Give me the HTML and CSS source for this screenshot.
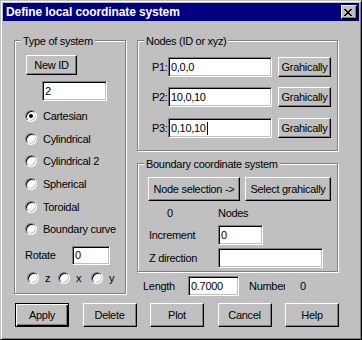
FILE: index.html
```html
<!DOCTYPE html>
<html lang="en">
<head>
  <meta charset="UTF-8">
  <title>Define local coordinate system</title>
  <link rel="stylesheet" href="styles.css">
</head>
<body>
  <div class="dialog">
    <div class="titlebar">
      <span class="title">Define local coordinate system</span>
      <span class="close-btn">
        <svg width="8" height="7" viewBox="0 0 8 7" shape-rendering="crispEdges">
          <path d="M0 0h2v1h-2zM6 0h2v1h-2zM1 1h2v1h-2zM5 1h2v1h-2zM2 2h4v1h-4zM3 3h2v1h-2zM2 4h4v1h-4zM1 5h2v1h-2zM5 5h2v1h-2zM0 6h2v1h-2zM6 6h2v1h-2z" fill="#000"/>
        </svg>
      </span>
    </div>
    <div class="content">
      <div class="main">
        <div class="group type-group">
          <span class="legend">Type of system</span>
          <button class="btn new-id">New ID</button>
          <div class="field id-field">2</div>
          <div class="radios">
            <div class="radio-row"><span class="radio checked"></span><span>Cartesian</span></div>
            <div class="radio-row"><span class="radio"></span><span>Cylindrical</span></div>
            <div class="radio-row"><span class="radio"></span><span>Cylindrical 2</span></div>
            <div class="radio-row"><span class="radio"></span><span>Spherical</span></div>
            <div class="radio-row"><span class="radio"></span><span>Toroidal</span></div>
            <div class="radio-row"><span class="radio"></span><span>Boundary curve</span></div>
          </div>
          <div class="rotate-row">
            <span class="rotate-label">Rotate</span>
            <div class="field rotate-field">0</div>
          </div>
          <div class="axis-row">
            <div class="axis axis-z"><span class="radio"></span><span>z</span></div>
            <div class="axis axis-x"><span class="radio"></span><span>x</span></div>
            <div class="axis"><span class="radio"></span><span>y</span></div>
          </div>
        </div>

        <div class="right-col">
          <div class="group nodes-group">
            <span class="legend">Nodes (ID or xyz)</span>
            <div class="node-row">
              <span class="node-label">P1:</span>
              <div class="field node-field">0,0,0</div>
              <button class="btn pick">Grahically</button>
            </div>
            <div class="node-row">
              <span class="node-label">P2:</span>
              <div class="field node-field">10,0,10</div>
              <button class="btn pick">Grahically</button>
            </div>
            <div class="node-row">
              <span class="node-label">P3:</span>
              <div class="field node-field">0,10,10<span class="caret"></span></div>
              <button class="btn pick">Grahically</button>
            </div>
          </div>

          <div class="group boundary-group">
            <span class="legend">Boundary coordinate system</span>
            <div class="sel-row">
              <button class="btn node-sel">Node selection -&gt;</button>
              <button class="btn sel-graph">Select grahically</button>
            </div>
            <div class="count-row">
              <span class="count">0</span>
              <span>Nodes</span>
            </div>
            <div class="form-row inc-row">
              <span class="form-label">Increment</span>
              <div class="field inc-field">0</div>
            </div>
            <div class="form-row zdir-row">
              <span class="form-label">Z direction</span>
              <div class="field zdir-field"></div>
            </div>
          </div>

          <div class="length-row">
            <span class="length-label">Length</span>
            <div class="field length-field">0.7000</div>
            <span class="number-label">Number</span>
            <span class="number-value">0</span>
          </div>
        </div>
      </div>

      <div class="actions">
        <button class="btn action default">Apply</button>
        <button class="btn action">Delete</button>
        <button class="btn action">Plot</button>
        <button class="btn action">Cancel</button>
        <button class="btn action">Help</button>
      </div>
    </div>
  </div>
</body>
</html>
```

FILE: styles.css
```css
* {
  box-sizing: border-box;
}
html, body {
  margin: 0;
}
body {
  background: #c0c0c0;
  font-family: "Liberation Sans", Arial, sans-serif;
  font-size: 11px;
  letter-spacing: -0.3px;
  color: #000;
}

/* window frame */
.dialog {
  width: 362px;
  height: 340px;
  padding: 2px;
  background: #c0c0c0;
  border: 1px solid;
  border-color: #c0c0c0 #000 #000 #c0c0c0;
  box-shadow: inset 1px 1px #fff, inset -1px -1px #808080;
}
.titlebar {
  height: 18px;
  display: flex;
  align-items: center;
  justify-content: space-between;
  padding: 0 2px 0 3px;
  background: #000080;
  color: #fff;
}
.title {
  font-weight: bold;
  font-size: 12px;
  letter-spacing: -0.1px;
}
.close-btn {
  width: 16px;
  height: 14px;
  padding: 3px 0 0 2px;
  background: #c0c0c0;
  border: 1px solid;
  border-color: #fff #000 #000 #fff;
  box-shadow: inset -1px -1px #808080;
}
.close-btn svg {
  display: block;
}

.content {
  padding: 19px 0 0 11px;
}
.main {
  display: grid;
  grid-template-columns: 112px 201px;
  column-gap: 11px;
  align-items: start;
}

/* controls */
.btn {
  padding: 0;
  font: inherit;
  letter-spacing: inherit;
  color: #000;
  background: #c0c0c0;
  border: 1px solid;
  border-color: #fff #000 #000 #fff;
  box-shadow: inset -1px -1px #808080;
  border-radius: 0;
}
.btn.default {
  border-color: #000;
  box-shadow: inset 1px 1px #fff, inset -1px -1px #000, inset -2px -2px #808080;
}
.field {
  display: flex;
  align-items: center;
  padding: 0 2px;
  background: #fff;
  border: 1px solid;
  border-color: #808080 #fff #fff #808080;
  box-shadow: inset 1px 1px #000, inset -1px -1px #c0c0c0;
  white-space: nowrap;
}
.caret {
  width: 1px;
  height: 13px;
  margin-left: 1px;
  background: #000;
}
.radio {
  position: relative;
  flex: none;
  width: 12px;
  height: 12px;
  border-radius: 50%;
  background: #fff;
  border: 1px solid;
  border-color: #808080 #fff #fff #808080;
  box-shadow: inset 1px 1px #000, inset -1px -1px #c0c0c0;
}
.radio.checked::after {
  content: "";
  position: absolute;
  left: 3px;
  top: 3px;
  width: 4px;
  height: 4px;
  border-radius: 50%;
  background: #000;
}

/* group boxes */
.group {
  position: relative;
  border: 1px solid #808080;
  box-shadow: inset 1px 1px #fff, 1px 1px #fff;
}
.legend {
  position: absolute;
  top: -6px;
  left: 6px;
  padding: 0 2px;
  line-height: 13px;
  background: #c0c0c0;
  white-space: nowrap;
}

/* type of system */
.type-group {
  height: 254px;
  display: flex;
  flex-direction: column;
  align-items: flex-start;
}
.new-id {
  margin: 14px 0 0 11px;
  width: 51px;
  height: 20px;
}
.id-field {
  margin: 6px 0 0 27px;
  width: 65px;
  height: 20px;
}
.radios {
  margin-top: 4px;
}
.radio-row {
  height: 22.6px;
  display: flex;
  align-items: center;
  gap: 6px;
  padding-left: 10px;
}
.rotate-row {
  display: flex;
  align-items: center;
  margin: 5px 0 0 10px;
}
.rotate-label {
  width: 47px;
}
.rotate-field {
  width: 38px;
  height: 19px;
}
.axis-row {
  display: flex;
  align-items: center;
  height: 14px;
  margin-top: 6px;
  padding-left: 12px;
}
.axis {
  display: flex;
  align-items: center;
  gap: 6px;
}
.axis-z {
  width: 31px;
}
.axis-x {
  width: 33px;
}

/* nodes */
.nodes-group {
  height: 111px;
  padding: 16px 0 0 14px;
}
.node-row {
  display: flex;
  align-items: center;
  height: 20px;
}
.node-row + .node-row {
  margin-top: 10px;
}
.node-row:last-child {
  margin-top: 11px;
}
.node-label {
  width: 16px;
}
.node-field {
  width: 104px;
  height: 20px;
}
.pick {
  margin-left: 6px;
  width: 53px;
  height: 20px;
}

/* boundary coordinate system */
.boundary-group {
  height: 109px;
  margin-top: 12px;
  padding: 13px 0 0 10px;
}
.sel-row {
  display: flex;
  gap: 5px;
}
.node-sel {
  width: 92px;
  height: 24px;
}
.sel-graph {
  width: 86px;
  height: 24px;
}
.count-row {
  display: flex;
  align-items: center;
  height: 14px;
  margin-top: 5px;
}
.count {
  width: 70px;
  padding-left: 19px;
}
.form-row {
  display: flex;
  align-items: center;
  padding-left: 1px;
}
.inc-row {
  margin-top: 5px;
}
.zdir-row {
  margin-top: 3px;
}
.form-label {
  width: 69px;
}
.inc-field {
  width: 45px;
  height: 20px;
}
.zdir-field {
  width: 105px;
  height: 20px;
}

/* length */
.length-row {
  display: flex;
  align-items: center;
  height: 20px;
  margin-top: 4px;
  padding-left: 6px;
}
.length-label {
  width: 45px;
}
.length-field {
  width: 51px;
  height: 20px;
}
/* the old dialog clips this label just after the stem of the "r" */
.number-label {
  width: 36px;
  margin-left: 10px;
  overflow: hidden;
  white-space: nowrap;
}
.number-value {
  margin-left: 15px;
}

/* bottom buttons */
.actions {
  display: flex;
  justify-content: space-between;
  width: 324px;
  margin: 7px 0 0 1px;
}
.action {
  width: 54px;
  height: 24px;
}
```
